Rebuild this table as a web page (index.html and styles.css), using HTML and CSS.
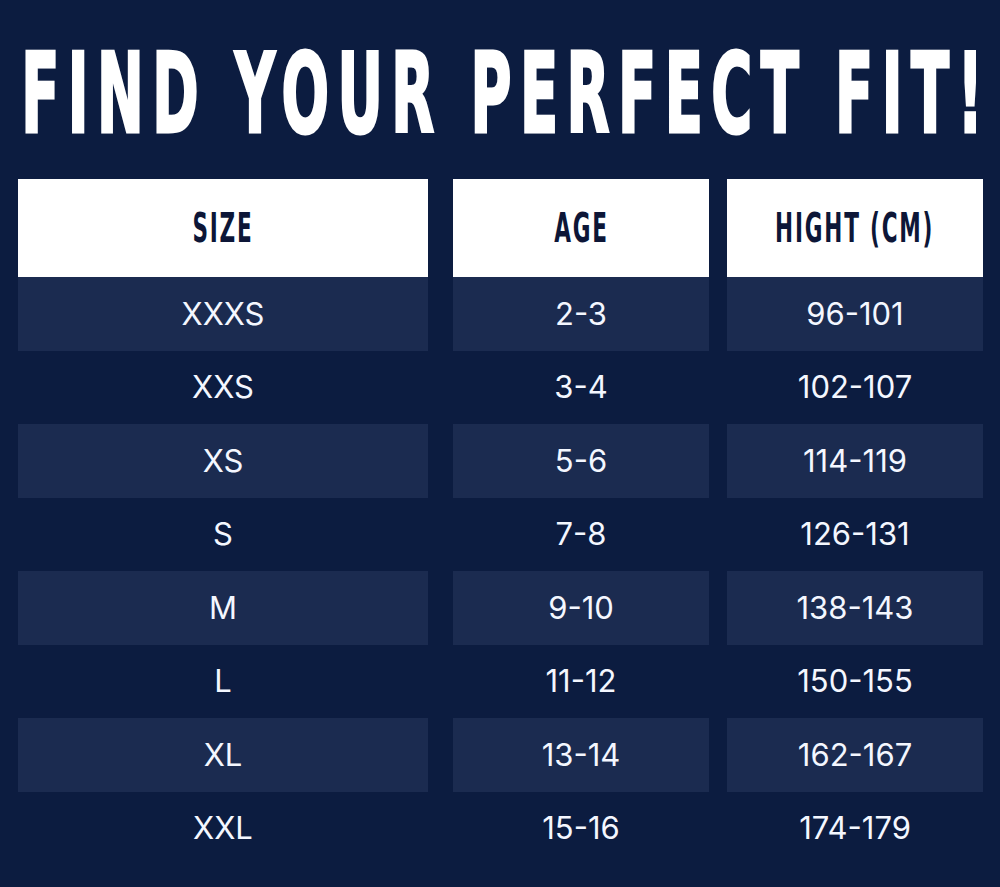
FILE: index.html
```html
<!DOCTYPE html>
<html lang="en">
<head>
<meta charset="utf-8">
<title>Find your perfect fit</title>
<link rel="stylesheet" href="styles.css">
</head>
<body>
<main class="page">
  <h1 class="title"><span class="title-text">FIND YOUR PERFECT FIT!</span></h1>
  <div class="chart">
    <div class="head c1"><span class="head-text">SIZE</span></div>
    <div class="head c2"><span class="head-text">AGE</span></div>
    <div class="head c3"><span class="head-text">HIGHT (CM)</span></div>

    <div class="cell c1 shade">XXXS</div><div class="cell c2 shade">2-3</div><div class="cell c3 shade">96-101</div>
    <div class="cell c1">XXS</div><div class="cell c2">3-4</div><div class="cell c3">102-107</div>
    <div class="cell c1 shade">XS</div><div class="cell c2 shade">5-6</div><div class="cell c3 shade">114-119</div>
    <div class="cell c1">S</div><div class="cell c2">7-8</div><div class="cell c3">126-131</div>
    <div class="cell c1 shade">M</div><div class="cell c2 shade">9-10</div><div class="cell c3 shade">138-143</div>
    <div class="cell c1">L</div><div class="cell c2">11-12</div><div class="cell c3">150-155</div>
    <div class="cell c1 shade">XL</div><div class="cell c2 shade">13-14</div><div class="cell c3 shade">162-167</div>
    <div class="cell c1">XXL</div><div class="cell c2">15-16</div><div class="cell c3">174-179</div>
  </div>
</main>
</body>
</html>
```
FILE: styles.css
```css
html, body {
  margin: 0;
  padding: 0;
}
body {
  background: #0c1c40;
  width: 1000px;
  height: 887px;
  overflow: hidden;
}
.page {
  display: flex;
  flex-direction: column;
  padding-top: 38px;
}
.title {
  margin: 0;
  height: 112px;
  display: flex;
  justify-content: center;
  font-family: "DejaVu Sans Condensed", "DejaVu Sans", sans-serif;
  font-stretch: condensed;
  font-weight: 700;
  font-size: 111px;
  line-height: 1;
  color: #ffffff;
  white-space: nowrap;
}
.title-text {
  display: inline-block;
  flex: none;
  transform: scaleX(0.56);
  letter-spacing: 15px;
  margin-left: 12px;
  -webkit-text-stroke: 3px #ffffff;
}
.chart {
  margin-top: 29px;
  margin-left: 18px;
  display: grid;
  grid-template-columns: 410px 25px 256px 18px 256px;
  grid-template-rows: 98px;
  grid-auto-rows: 73.5px;
}
.c1 { grid-column: 1; }
.c2 { grid-column: 3; }
.c3 { grid-column: 5; }
.head {
  background: #ffffff;
  display: flex;
  align-items: center;
  justify-content: center;
  font-family: "DejaVu Sans Condensed", "DejaVu Sans", sans-serif;
  font-stretch: condensed;
  font-weight: 700;
  font-size: 40px;
  line-height: 1;
  color: #0d1637;
  white-space: nowrap;
}
.head-text {
  display: inline-block;
  transform: scaleX(0.6);
  letter-spacing: 3px;
}
.cell {
  display: flex;
  align-items: center;
  justify-content: center;
  font-family: "Inter", "Liberation Sans", sans-serif;
  font-size: 31px;
  font-weight: 400;
  color: #f4f7ff;
  padding-bottom: 1px;
}
.shade {
  background: #1b2b50;
}
```
